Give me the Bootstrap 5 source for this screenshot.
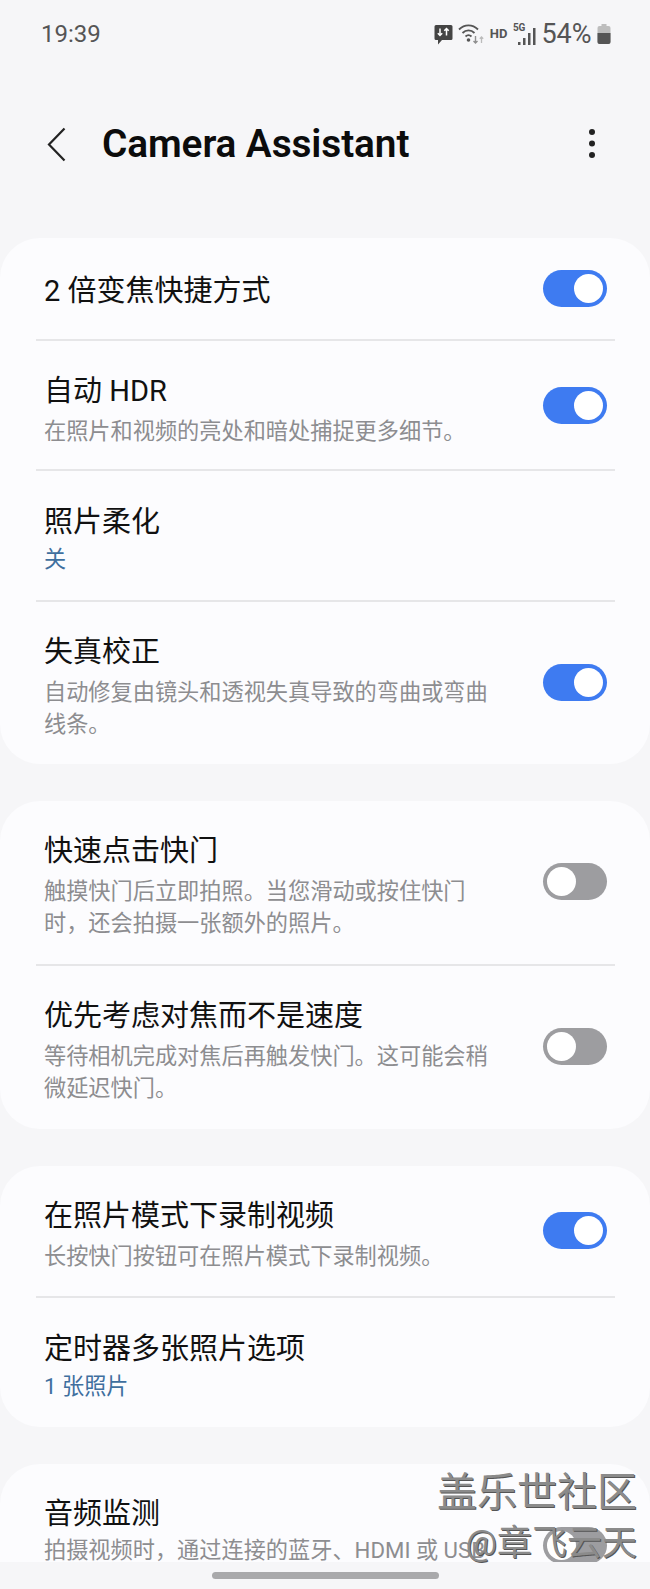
<!DOCTYPE html>
<html lang="zh-CN">
<head>
  <meta charset="UTF-8">
  <title>Camera Assistant</title>
  <link href="https://cdn.jsdelivr.net/npm/bootstrap@5.3.3/dist/css/bootstrap.min.css" rel="stylesheet">
  <style>
    html, body { height: 1589px; overflow: hidden; }
    body { background: #f6f6f8; font-family: Roboto, "Noto Sans CJK SC", sans-serif; color: #111; position: relative; }
    .status-row { height: 68px; padding: 14px 39px 0 41px; color: #555; }
    .clock { font-size: 24px; line-height: 40px; }
    .status-icons { gap: 5.5px; height: 40px; }
    .hd-mark { font-size: 13px; font-weight: 700; }
    .net-mark { position: relative; width: 23px; height: 24px; }
    .net-mark span { position: absolute; left: 0; top: 0; font-size: 10px; font-weight: 700; line-height: 12px; }
    .pct { font-size: 27px; line-height: 40px; }
    .top-row { height: 152px; margin-bottom: 18px; padding: 0 55px 0 47px; }
    .page-title { font-size: 38.8px; font-weight: 600; margin: 0 0 0 36px; color: #0c0c0c; letter-spacing: -.1px; }
    .panel { background: #fcfcfe; border-radius: 40px; margin-bottom: 37px; }
    .panel-cut { margin-bottom: 0; border-radius: 40px 40px 0 0; }
    .item { padding: 32px 43px 22px 44px; }
    .item-one { min-height: 101px; padding-top: 0; padding-bottom: 0; }
    .item-two { min-height: 129px; padding-top: 33px; }
    .item-end { padding-bottom: 24px; }
    .item-tall { padding-bottom: 25px; }
    .item-cut { height: 124px; padding-bottom: 0; }
    .item-name { font-size: 29px; line-height: 36px; }
    .item-one .item-name { padding-top: 4px; }
    .item-sub { font-size: 22.2px; line-height: 32px; color: #8d8d90; margin-top: 6px; width: 450px; }
    .item-sub-close { margin-top: 2px; }
    .item-val { font-size: 22.2px; line-height: 32px; color: #3f6f9e; margin-top: 3px; }
    .sep { height: 2px; background: #e6e6e8; margin: 0 35px 0 36px; }
    .sw { flex: none; width: 64px; height: 37px; border-radius: 19px; position: relative; background: #3e7bf1; margin-bottom: 10px; }
    .item-one .sw { margin-bottom: 0; }
    .item-cut .sw { margin: 31px 0 0; }
    .sw::after { content: ""; position: absolute; top: 4px; right: 4px; width: 29px; height: 29px; border-radius: 50%; background: #fff; }
    .sw-off { background: #9d9da0; }
    .sw-off::after { right: auto; left: 4px; }
    .nav-band { position: absolute; left: 0; right: 0; top: 1562px; bottom: 0; background: #f6f6f8; }
    .nav-pill { position: absolute; left: 212px; top: 10px; width: 227px; height: 7px; border-radius: 4px; background: #a9a9ab; }
    .wm { position: absolute; right: 13px; text-align: right; color: #8b8b8b; text-shadow: 1px 1px 0 #555; line-height: 1; white-space: nowrap; }
    .wm-a { top: 1473px; font-size: 40px; }
    .wm-b { top: 1526px; font-size: 35px; }
  </style>
</head>
<body>
  <div class="status-row d-flex justify-content-between align-items-start">
    <div class="clock">19:39</div>
    <div class="status-icons d-flex align-items-center">
      <svg width="19" height="21" viewBox="0 0 19 21">
        <path d="M2 1h15a1.500 1.500 0 0 1 1.500 1.500v12a1.500 1.500 0 0 1-1.500 1.500H8l-4 4.500V16H2a1.500 1.500 0 0 1-1.500-1.500v-12A1.500 1.500 0 0 1 2 1z" fill="#444"/>
        <path d="M6 4.500v7M3.800 9.200 6 11.500l2.200-2.300M12.500 11.500v-7M10.300 6.800l2.200-2.300 2.200 2.300" stroke="#fff" stroke-width="1.500" fill="none"/>
      </svg>
      <svg width="26" height="22" viewBox="0 0 26 22">
        <path d="M1 6.500C6.500 1 14.500 1 20 6.500M4.500 10C8 6.500 13 6.500 16.500 10M7.500 13.500c2-1.800 4-1.800 6 0" stroke="#555" stroke-width="1.800" fill="none"/>
        <circle cx="10.500" cy="17" r="1.800" fill="#555"/>
        <path d="M17.500 13v7M15.500 18l2 2 2-2" stroke="#8f8f8f" stroke-width="1.400" fill="none"/>
        <path d="M23.500 20v-6M21.800 15.700l1.700-1.700 1.700 1.700" stroke="#bbb" stroke-width="1.300" fill="none"/>
      </svg>
      <span class="hd-mark">HD</span>
      <div class="net-mark">
        <span>5G</span>
        <svg width="23" height="24" viewBox="0 0 23 24">
          <path d="M5 19h2.500v3H5zM10 15h2.500v7H10zM15 10h2.500v12H15zM20 5h2.500v17H20z" fill="#555"/>
        </svg>
      </div>
      <span class="pct">54%</span>
      <svg width="14" height="20" viewBox="0 0 14 20">
        <path d="M4.500 0h5v2h-5z" fill="#bdbdbd"/>
        <rect x="0.500" y="2" width="13" height="18" rx="2" fill="#bdbdbd"/>
        <path d="M.5 9h13v9a2 2 0 0 1-2 2h-9a2 2 0 0 1-2-2z" fill="#555"/>
      </svg>
    </div>
  </div>

  <div class="top-row d-flex align-items-center">
    <svg width="19" height="35" viewBox="0 0 19 35">
      <path d="M17.500 1.500 2 17.500l15.500 16" stroke="#222" stroke-width="2.200" fill="none"/>
    </svg>
    <h1 class="page-title flex-grow-1">Camera Assistant</h1>
    <svg width="6" height="30" viewBox="0 0 6 30">
      <circle cx="3" cy="3" r="3" fill="#222"/>
      <circle cx="3" cy="14.500" r="3" fill="#222"/>
      <circle cx="3" cy="26" r="3" fill="#222"/>
    </svg>
  </div>

  <div class="panel">
    <div class="item item-one d-flex align-items-center justify-content-between">
      <div class="item-name">2 倍变焦快捷方式</div>
      <span class="sw"></span>
    </div>
    <div class="sep"></div>
    <div class="item d-flex align-items-center justify-content-between">
      <div>
        <div class="item-name">自动 HDR</div>
        <div class="item-sub">在照片和视频的亮处和暗处捕捉更多细节。</div>
      </div>
      <span class="sw"></span>
    </div>
    <div class="sep"></div>
    <div class="item item-two">
      <div class="item-name">照片柔化</div>
      <div class="item-val">关</div>
    </div>
    <div class="sep"></div>
    <div class="item item-end d-flex align-items-center justify-content-between">
      <div>
        <div class="item-name">失真校正</div>
        <div class="item-sub">自动修复由镜头和透视失真导致的弯曲或弯曲线条。</div>
      </div>
      <span class="sw"></span>
    </div>
  </div>

  <div class="panel">
    <div class="item item-tall d-flex align-items-center justify-content-between">
      <div>
        <div class="item-name">快速点击快门</div>
        <div class="item-sub">触摸快门后立即拍照。当您滑动或按住快门时，还会拍摄一张额外的照片。</div>
      </div>
      <span class="sw sw-off"></span>
    </div>
    <div class="sep"></div>
    <div class="item item-tall d-flex align-items-center justify-content-between">
      <div>
        <div class="item-name">优先考虑对焦而不是速度</div>
        <div class="item-sub">等待相机完成对焦后再触发快门。这可能会稍微延迟快门。</div>
      </div>
      <span class="sw sw-off"></span>
    </div>
  </div>

  <div class="panel">
    <div class="item item-end d-flex align-items-center justify-content-between">
      <div>
        <div class="item-name">在照片模式下录制视频</div>
        <div class="item-sub">长按快门按钮可在照片模式下录制视频。</div>
      </div>
      <span class="sw"></span>
    </div>
    <div class="sep"></div>
    <div class="item item-two">
      <div class="item-name">定时器多张照片选项</div>
      <div class="item-val">1 张照片</div>
    </div>
  </div>

  <div class="panel panel-cut">
    <div class="item item-cut d-flex align-items-start justify-content-between">
      <div>
        <div class="item-name">音频监测</div>
        <div class="item-sub item-sub-close">拍摄视频时，通过连接的蓝牙、HDMI 或 USB</div>
      </div>
      <span class="sw sw-off"></span>
    </div>
  </div>

  <div class="nav-band"><div class="nav-pill"></div></div>
  <div class="wm wm-a">盖乐世社区</div>
  <div class="wm wm-b">@章飞云天</div>

  <script src="https://cdn.jsdelivr.net/npm/bootstrap@5.3.3/dist/js/bootstrap.bundle.min.js"></script>
</body>
</html>
